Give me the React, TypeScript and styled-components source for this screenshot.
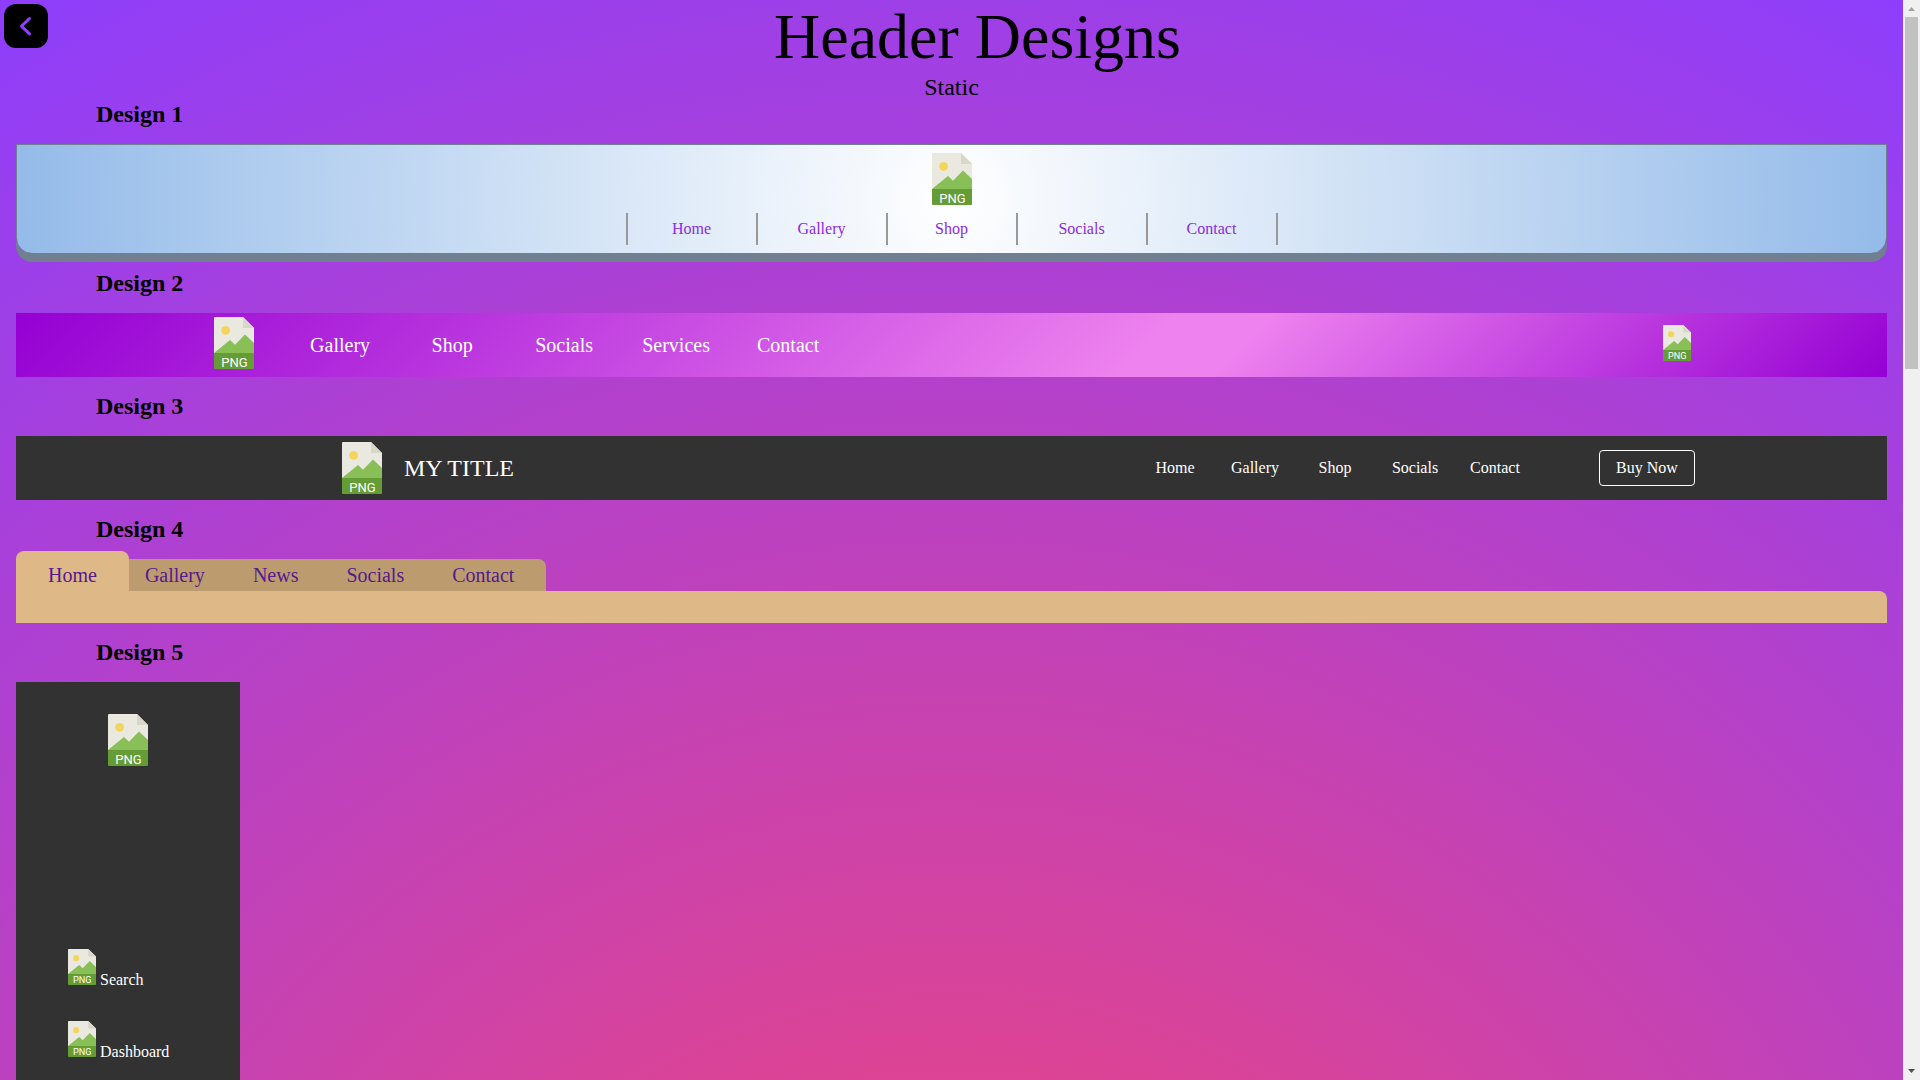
import React from "react";
import styled, { createGlobalStyle } from "styled-components";

const GlobalStyle = createGlobalStyle`
  *, *::before, *::after { box-sizing: border-box; }
  body {
    margin: 0;
    font-family: "Liberation Serif", "Times New Roman", serif;
    font-size: 16px;
    color: #000;
  }
  h1, h2, p, ul { margin: 0; padding: 0; }
  ul { list-style: none; }
  a { text-decoration: none; }
`;

const Shell = styled.div`
  display: grid;
  grid-template-columns: minmax(0, 1fr) 17px;
  height: 100vh;
  overflow: hidden;
`;

const Page = styled.main`
  overflow: hidden;
  background: radial-gradient(circle, rgb(252, 70, 107) 0%, rgb(142, 62, 252) 100%) top / 100% 3210px;
`;

const TopBar = styled.div`
  display: flex;
  align-items: flex-start;
`;

const BackButton = styled.button`
  display: flex;
  align-items: center;
  justify-content: center;
  width: 44px;
  height: 44px;
  margin: 4px;
  padding: 0;
  border: 0;
  border-radius: 12px;
  background: #000;
`;

const PageTitle = styled.h1`
  flex: 1;
  font-size: 64px;
  font-weight: 400;
  line-height: 74px;
  text-align: center;
`;

const Subtitle = styled.p`
  font-size: 24px;
  line-height: 27px;
  text-align: center;
`;

const DesignTitle = styled.h2`
  margin: 0 80px 16px;
  font-size: 24px;
  font-weight: 700;
  line-height: 27px;
`;

const Design = styled.section`
  margin: 0 16px 16px;
`;

const FileIcon = styled.svg<{ $small?: boolean }>`
  display: block;
  flex: none;
  width: ${(p) => (p.$small ? 28 : 40)}px;
  height: ${(p) => (p.$small ? 36 : 52)}px;
  margin: 0 ${(p) => (p.$small ? 4 : 6)}px;
`;

const CardHeader = styled.header`
  display: flex;
  flex-direction: column;
  align-items: center;
  gap: 8px;
  padding: 8px;
  border: 1px solid slategray;
  border-radius: 0 0 16px 16px;
  background: radial-gradient(circle, #fff 0%, rgb(148, 187, 233) 100%);
  box-shadow: 0 8px slategray;
`;

const DividedList = styled.ul`
  display: flex;
  border-left: 2px solid #999;
`;

const DividedItem = styled.li`
  width: 130px;
  border-right: 2px solid #999;
  line-height: 32px;
  text-align: center;

  a { color: blueviolet; }
`;

const VioletHeader = styled.header`
  display: flex;
  align-items: flex-start;
  height: 64px;
  padding: 4px calc(10% + 5px);
  background: linear-gradient(135deg, darkviolet, violet 60%, violet 65%, darkviolet);
`;

const VioletList = styled.ul`
  display: flex;
  align-self: center;
  flex: 1;
  margin-left: 24px;
`;

const VioletItem = styled.li`
  width: 112px;
  font-size: 20px;
  line-height: 24px;
  text-align: center;

  a { color: #fff; }
`;

const IconSlot = styled.div`
  padding-top: 8px;
`;

const DarkHeader = styled.header`
  display: flex;
  align-items: center;
  height: 64px;
  padding: 0 192px 0 320px;
  background: #323232;
  color: #fff;
`;

const Brand = styled.p`
  flex: 1;
  margin-left: 16px;
  font-size: 24px;
  line-height: 28px;
`;

const DarkList = styled.ul`
  display: flex;
  margin-right: 64px;
`;

const DarkItem = styled.li`
  width: 80px;
  text-align: center;

  a { color: #fff; }
`;

const BuyButton = styled.button`
  width: 96px;
  height: 36px;
  padding: 0;
  border: 1px solid #fff;
  border-radius: 4px;
  background: transparent;
  color: #fff;
  font: inherit;
`;

const TabList = styled.ul`
  display: flex;
  align-items: flex-end;
  height: 32px;
`;

const Tab = styled.li<{ $active?: boolean }>`
  height: ${(p) => (p.$active ? 40 : 32)}px;
  padding: ${(p) => (p.$active ? "8px 32px 0" : "0 32px 0 16px")};
  border-radius: ${(p) => (p.$active ? "8px 8px 0 0" : "0")};
  background: ${(p) => (p.$active ? "burlywood" : "#bc9c6f")};
  font-size: 20px;
  line-height: 32px;

  &:last-child { border-top-right-radius: 8px; }
  a { color: #551a8b; }
`;

const TabPanel = styled.div`
  height: 32px;
  border-top-right-radius: 8px;
  background: burlywood;
`;

const Sidebar = styled.aside`
  display: flex;
  flex-direction: column;
  align-items: center;
  width: 224px;
  min-height: 640px;
  padding: 32px 0;
  background: #323232;
`;

const SideList = styled.ul`
  display: flex;
  flex-direction: column;
  gap: 36px;
  align-self: stretch;
  margin-top: 183px;
  padding-left: 48px;
`;

const SideLink = styled.a`
  display: flex;
  align-items: baseline;
  height: 36px;
  color: #fff;
`;

const ScrollTrack = styled.div`
  display: flex;
  flex-direction: column;
  align-items: center;
  background: #f0f0f0;
`;

const ScrollArrow = styled.svg`
  display: block;
  flex: none;
  width: 17px;
  height: 17px;
`;

const ScrollThumb = styled.div`
  width: 13px;
  height: 352px;
  margin-bottom: auto;
  background: #c1c1c1;
`;

function PngIcon({ small }: { small?: boolean }) {
  return (
    <FileIcon $small={small} viewBox="0 0 40 52" preserveAspectRatio="none" role="img" aria-label="PNG file">
      <path d="M1 0H29L40 11V36H0V1Q0 0 1 0Z" fill="#E9E9E0" />
      <path d="M29 0V11H40Z" fill="#D9D7CA" />
      <circle cx="11.6" cy="13.3" r="4.4" fill="#F3D55B" />
      <path d="M0 36L16 23L21 27.8L31 17.5L40 26V37H0Z" fill="#88C057" />
      <path d="M0 36H40V51Q40 52 39 52H1Q0 52 0 51Z" fill="#659C35" />
      <text x="20.4" y="49.5" fill="#fff" fontFamily="Roboto, sans-serif" fontSize="13" fontWeight="400" textAnchor="middle">
        PNG
      </text>
    </FileIcon>
  );
}

export default function App() {
  return (
    <>
      <GlobalStyle />
      <Shell>
        <Page>
          <TopBar>
            <BackButton aria-label="Back">
              <svg width="44" height="44" viewBox="0 0 44 44" fill="none" stroke="#8f3ff8" strokeWidth="3" strokeLinecap="round" strokeLinejoin="round">
                <path d="M25.5 14.5L17.5 22.2L25.5 29.9" />
              </svg>
            </BackButton>
            <PageTitle>Header Designs</PageTitle>
          </TopBar>
          <Subtitle>Static</Subtitle>

          <Design>
            <DesignTitle>Design 1</DesignTitle>
            <CardHeader>
              <PngIcon />
              <DividedList>
                {["Home", "Gallery", "Shop", "Socials", "Contact"].map((t) => (
                  <DividedItem key={t}><a href="#">{t}</a></DividedItem>
                ))}
              </DividedList>
            </CardHeader>
          </Design>

          <Design>
            <DesignTitle>Design 2</DesignTitle>
            <VioletHeader>
              <PngIcon />
              <VioletList>
                {["Gallery", "Shop", "Socials", "Services", "Contact"].map((t) => (
                  <VioletItem key={t}><a href="#">{t}</a></VioletItem>
                ))}
              </VioletList>
              <IconSlot><PngIcon small /></IconSlot>
            </VioletHeader>
          </Design>

          <Design>
            <DesignTitle>Design 3</DesignTitle>
            <DarkHeader>
              <PngIcon />
              <Brand>MY TITLE</Brand>
              <DarkList>
                {["Home", "Gallery", "Shop", "Socials", "Contact"].map((t) => (
                  <DarkItem key={t}><a href="#">{t}</a></DarkItem>
                ))}
              </DarkList>
              <BuyButton>Buy Now</BuyButton>
            </DarkHeader>
          </Design>

          <Design>
            <DesignTitle>Design 4</DesignTitle>
            <TabList>
              {["Home", "Gallery", "News", "Socials", "Contact"].map((t, i) => (
                <Tab key={t} $active={i === 0}><a href="#">{t}</a></Tab>
              ))}
            </TabList>
            <TabPanel />
          </Design>

          <Design>
            <DesignTitle>Design 5</DesignTitle>
            <Sidebar>
              <PngIcon />
              <SideList>
                {["Search", "Dashboard"].map((t) => (
                  <li key={t}>
                    <SideLink href="#"><PngIcon small />{t}</SideLink>
                  </li>
                ))}
              </SideList>
            </Sidebar>
          </Design>
        </Page>

        <ScrollTrack aria-hidden="true">
          <ScrollArrow viewBox="0 0 17 17"><path d="M5 11L8.5 7L12 11Z" fill="#a3a3a3" /></ScrollArrow>
          <ScrollThumb />
          <ScrollArrow viewBox="0 0 17 17"><path d="M5 6L8.5 10L12 6Z" fill="#505050" /></ScrollArrow>
        </ScrollTrack>
      </Shell>
    </>
  );
}
